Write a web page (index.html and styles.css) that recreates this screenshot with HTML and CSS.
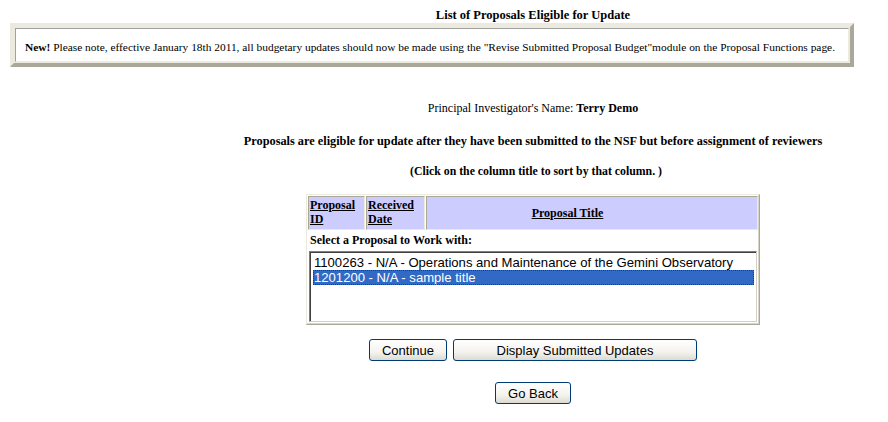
FILE: index.html
```html
<!DOCTYPE html>
<html>
<head>
<meta charset="utf-8">
<title>List of Proposals Eligible for Update</title>
<link rel="stylesheet" href="styles.css">
</head>
<body>
<div class="page">
  <div class="center">
    <h1 class="title">List of Proposals Eligible for Update</h1>
  </div>
  <div class="notice">
    <div class="notice-inner">
      <b>New!</b> Please note, effective January 18th 2011, all budgetary updates should now be made using the "Revise Submitted Proposal Budget"module on the Proposal Functions page.
    </div>
  </div>
  <div class="center">
    <p class="pi">Principal Investigator's Name: <b>Terry Demo</b></p>
    <p class="info">Proposals are eligible for update after they have been submitted to the NSF but before assignment of reviewers</p>
    <p class="info sort">(Click on the column title to sort by that column. )</p>
    <div class="table-wrap">
      <table class="props">
        <tr class="head">
          <th class="c-id"><a href="#">Proposal ID</a></th>
          <th class="c-date"><a href="#">Received Date</a></th>
          <th class="c-title"><a href="#">Proposal Title</a></th>
        </tr>
        <tr>
          <td colspan="3" class="select-label">Select a Proposal to Work with:</td>
        </tr>
        <tr>
          <td colspan="3" class="list-cell">
            <div class="listbox">
              <div class="opt">1100263 - N/A - Operations and Maintenance of the Gemini Observatory</div>
              <div class="opt sel">1201200 - N/A - sample title</div>
            </div>
          </td>
        </tr>
      </table>
    </div>
    <div class="buttons">
      <button class="btn btn-continue">Continue</button>
      <button class="btn btn-display">Display Submitted Updates</button>
    </div>
    <div class="buttons back">
      <button class="btn btn-back">Go Back</button>
    </div>
  </div>
</div>
</body>
</html>
```

FILE: styles.css
```css
html, body {
  margin: 0;
  padding: 0;
  background: #ffffff;
}
body {
  font-family: "Liberation Serif", "Times New Roman", serif;
  color: #000;
}
.page {
  width: 888px;
  padding-top: 8px;
}
.center {
  margin-left: 178px;
  width: 710px;
}
.title {
  margin: 0;
  font-size: 12.5px;
  font-weight: bold;
  text-align: center;
  line-height: 15px;
}
.notice {
  width: 834px;
  margin: 0 0 0 10px;
  border-style: solid;
  border-width: 4px;
  border-color: #eceadf #a9a899 #a9a899 #eceadf;
  background: #eceadf;
  padding: 1px;
}
.notice-inner {
  background: #fff;
  border: 1px solid;
  border-color: #a0a0a0 #eceadf #eceadf #a0a0a0;
  padding: 11px 6px 7px 9px;
  font-size: 11.4px;
  line-height: 14px;
  white-space: nowrap;
}
.pi {
  margin: 34px 0 0 0;
  text-align: center;
  font-size: 12px;
  line-height: 15px;
}
.info {
  margin: 18px 0 0 0;
  text-align: center;
  font-size: 12.3px;
  font-weight: bold;
  line-height: 15px;
}
.sort {
  margin-top: 15px;
  font-size: 11.8px;
  padding-left: 6px;
}
.table-wrap {
  display: flex;
  justify-content: center;
  margin-top: 15px;
}
.props {
  width: 454px;
  border-collapse: separate;
  border-spacing: 1px;
  border: 1px solid;
  border-color: #eceadf #a9a899 #a9a899 #eceadf;
  background: #fff;
  box-shadow: inset -1px -1px 0 #d7d5c8;
}
.props th, .props td {
  border: 1px solid;
  border-color: #a9a899 #eceadf #eceadf #a9a899;
  padding: 1px;
  font-size: 12px;
}
.head th {
  background: #ccccff;
  text-align: left;
  vertical-align: top;
  font-weight: bold;
  line-height: 14px;
  height: 30px;
}
.head a {
  color: #000;
  text-decoration: underline;
}
.c-id { width: 53px; }
.c-date { width: 55px; }
.head .c-title {
  text-align: center;
  vertical-align: middle;
  padding-right: 50px;
}
.select-label {
  font-weight: bold;
  line-height: 14px;
  border-color: transparent !important;
}
.list-cell {
  padding: 0 !important;
  border-color: transparent !important;
}
.listbox {
  height: 66px;
  border: 1px solid;
  border-color: #808080 #d4d0c8 #d4d0c8 #808080;
  box-shadow: inset 1px 1px 0 #404040;
  font-family: "Liberation Sans", Arial, sans-serif;
  font-size: 13.1px;
  line-height: 15px;
  padding: 3px 2px 0 3px;
}
.opt {
  padding: 0 1px;
}
.opt.sel {
  background: #316ac5;
  color: #fff;
  outline: 1px dotted #1b3c7a;
  outline-offset: -1px;
}
.buttons {
  display: flex;
  justify-content: center;
  gap: 6px;
  margin-top: 14px;
}
.buttons.back {
  margin-top: 21px;
}
.btn {
  font-family: "Liberation Sans", Arial, sans-serif;
  font-size: 13px;
  height: 22px;
  padding: 0;
  border: 1px solid #003c74;
  border-radius: 3px;
  background: linear-gradient(#ffffff, #f4f3ee 60%, #dcdad2);
  color: #000;
}
.btn-continue { width: 78px; }
.btn-display { width: 244px; }
.btn-back { width: 76px; }
```
